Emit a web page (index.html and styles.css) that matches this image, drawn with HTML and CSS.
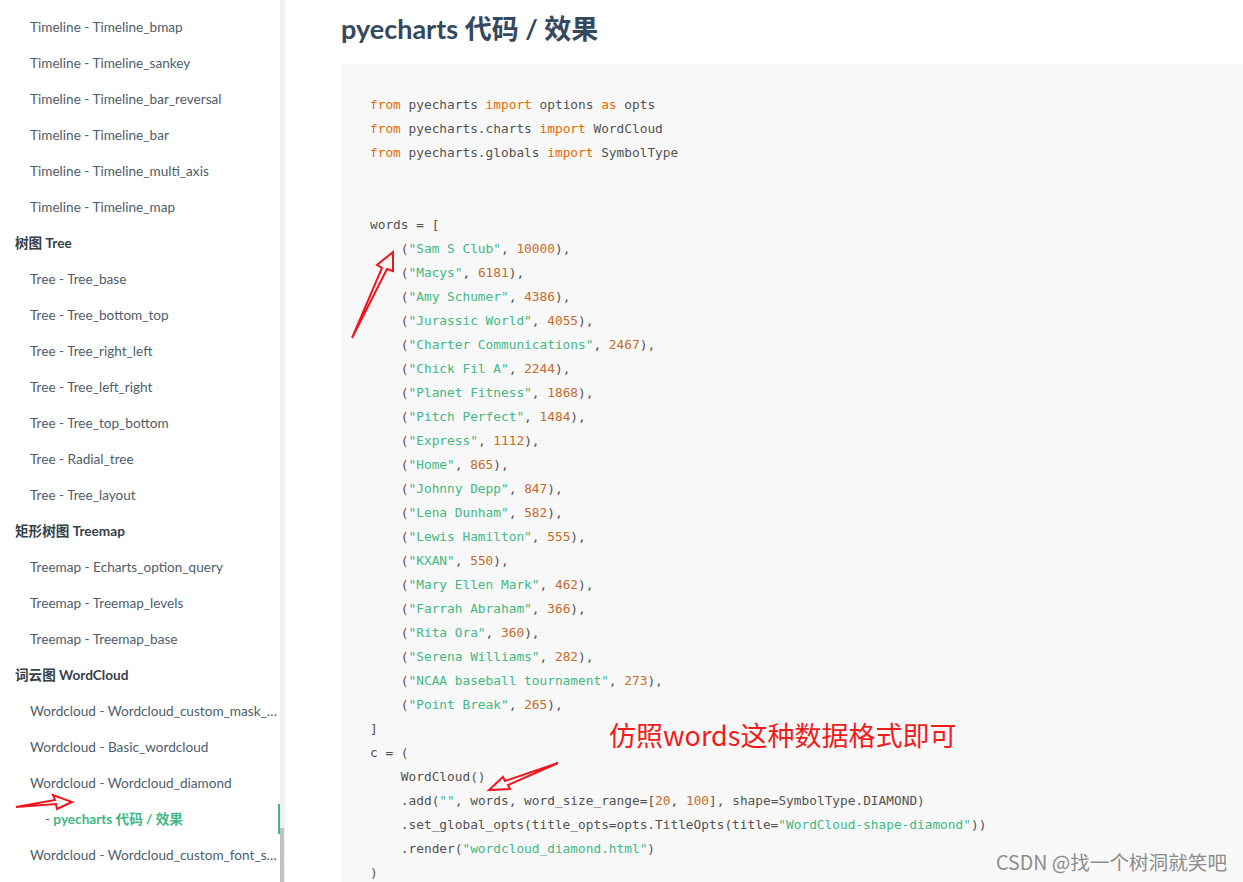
FILE: index.html
```html
<!DOCTYPE html>
<html lang="zh-CN">
<head>
    <meta charset="UTF-8">
    <meta name="viewport" content="width=device-width, initial-scale=1.0">
    <title>pyecharts - WordCloud</title>
    <link rel="stylesheet" href="styles.css">
</head>
<body>

<aside class="sidebar">
    <ul class="nav">
        <li class="nav-item">Timeline - Timeline_bmap</li>
        <li class="nav-item">Timeline - Timeline_sankey</li>
        <li class="nav-item">Timeline - Timeline_bar_reversal</li>
        <li class="nav-item">Timeline - Timeline_bar</li>
        <li class="nav-item">Timeline - Timeline_multi_axis</li>
        <li class="nav-item">Timeline - Timeline_map</li>
        <li class="nav-group">树图 Tree</li>
        <li class="nav-item">Tree - Tree_base</li>
        <li class="nav-item">Tree - Tree_bottom_top</li>
        <li class="nav-item">Tree - Tree_right_left</li>
        <li class="nav-item">Tree - Tree_left_right</li>
        <li class="nav-item">Tree - Tree_top_bottom</li>
        <li class="nav-item">Tree - Radial_tree</li>
        <li class="nav-item">Tree - Tree_layout</li>
        <li class="nav-group">矩形树图 Treemap</li>
        <li class="nav-item">Treemap - Echarts_option_query</li>
        <li class="nav-item">Treemap - Treemap_levels</li>
        <li class="nav-item">Treemap - Treemap_base</li>
        <li class="nav-group">词云图 WordCloud</li>
        <li class="nav-item">Wordcloud - Wordcloud_custom_mask_image</li>
        <li class="nav-item">Wordcloud - Basic_wordcloud</li>
        <li class="nav-item">Wordcloud - Wordcloud_diamond</li>
        <li class="nav-sub active"><span class="dash">-</span> pyecharts 代码 / 效果</li>
        <li class="nav-item">Wordcloud - Wordcloud_custom_font_style</li>
    </ul>
    <div class="scrollbar"><div class="thumb"></div></div>
</aside>

<main class="content">
    <h1 class="title">pyecharts 代码 / 效果</h1>
    <div class="code">
        <div class="line"><span class="kw">from</span> pyecharts <span class="kw">import</span> options <span class="kw">as</span> opts</div>
        <div class="line"><span class="kw">from</span> pyecharts.charts <span class="kw">import</span> WordCloud</div>
        <div class="line"><span class="kw">from</span> pyecharts.globals <span class="kw">import</span> SymbolType</div>
        <div class="line"></div>
        <div class="line"></div>
        <div class="line">words = [</div>
        <div class="line in1">(<span class="str">"Sam S Club"</span>, <span class="num">10000</span>),</div>
        <div class="line in1">(<span class="str">"Macys"</span>, <span class="num">6181</span>),</div>
        <div class="line in1">(<span class="str">"Amy Schumer"</span>, <span class="num">4386</span>),</div>
        <div class="line in1">(<span class="str">"Jurassic World"</span>, <span class="num">4055</span>),</div>
        <div class="line in1">(<span class="str">"Charter Communications"</span>, <span class="num">2467</span>),</div>
        <div class="line in1">(<span class="str">"Chick Fil A"</span>, <span class="num">2244</span>),</div>
        <div class="line in1">(<span class="str">"Planet Fitness"</span>, <span class="num">1868</span>),</div>
        <div class="line in1">(<span class="str">"Pitch Perfect"</span>, <span class="num">1484</span>),</div>
        <div class="line in1">(<span class="str">"Express"</span>, <span class="num">1112</span>),</div>
        <div class="line in1">(<span class="str">"Home"</span>, <span class="num">865</span>),</div>
        <div class="line in1">(<span class="str">"Johnny Depp"</span>, <span class="num">847</span>),</div>
        <div class="line in1">(<span class="str">"Lena Dunham"</span>, <span class="num">582</span>),</div>
        <div class="line in1">(<span class="str">"Lewis Hamilton"</span>, <span class="num">555</span>),</div>
        <div class="line in1">(<span class="str">"KXAN"</span>, <span class="num">550</span>),</div>
        <div class="line in1">(<span class="str">"Mary Ellen Mark"</span>, <span class="num">462</span>),</div>
        <div class="line in1">(<span class="str">"Farrah Abraham"</span>, <span class="num">366</span>),</div>
        <div class="line in1">(<span class="str">"Rita Ora"</span>, <span class="num">360</span>),</div>
        <div class="line in1">(<span class="str">"Serena Williams"</span>, <span class="num">282</span>),</div>
        <div class="line in1">(<span class="str">"NCAA baseball tournament"</span>, <span class="num">273</span>),</div>
        <div class="line in1">(<span class="str">"Point Break"</span>, <span class="num">265</span>),</div>
        <div class="line">]</div>
        <div class="line">c = (</div>
        <div class="line in1">WordCloud()</div>
        <div class="line in1">.add(<span class="str">""</span>, words, word_size_range=[<span class="num">20</span>, <span class="num">100</span>], shape=SymbolType.DIAMOND)</div>
        <div class="line in1">.set_global_opts(title_opts=opts.TitleOpts(title=<span class="str">"WordCloud-shape-diamond"</span>))</div>
        <div class="line in1">.render(<span class="str">"wordcloud_diamond.html"</span>)</div>
        <div class="line">)</div>
    </div>
</main>

<!-- red annotations drawn over the screenshot -->
<div class="note">仿照words这种数据格式即可</div>
<svg class="marks" width="1243" height="882" viewBox="0 0 1243 882">
    <polygon points="352,338 382,268 377,265 393,252 393,271 387,269 352,338" />
    <polygon points="16,807 55,800 53,795 72,802 57,809 56,804 16,807" />
    <polygon points="558,763 505,781 503,777 489,790 510,789 508,785 558,763" />
</svg>
<div class="watermark">CSDN @找一个树洞就笑吧</div>

</body>
</html>
```

FILE: styles.css
```css
html, body {
    margin: 0;
    padding: 0;
    height: 100%;
    overflow: hidden;
}
body {
    font-family: Lato, "Noto Sans CJK SC", sans-serif;
    background-color: #fff;
    display: flex;
    position: relative;
}
.sidebar {
    width: 285px;
    flex-shrink: 0;
    display: flex;
    height: 882px;
}
.nav {
    list-style: none;
    margin: 0;
    padding: 9px 0 0 0;
    width: 280px;
    font-size: 13.6px;
}
.nav li {
    height: 36px;
    line-height: 36px;
    white-space: nowrap;
    overflow: hidden;
    text-overflow: ellipsis;
    box-sizing: border-box;
}
.nav-item {
    padding-left: 30px;
    padding-right: 2px;
    color: #505d6b;
}
.nav-group {
    padding-left: 15px;
    color: #364149;
    font-weight: bold;
}
.nav-sub {
    padding-left: 45px;
    color: #42b983;
    font-weight: bold;
}
.nav-sub .dash {
    color: #505d6b;
    font-weight: normal;
}
.nav .active {
    height: 30px;
    line-height: 30px;
    margin: 3px 0;
    border-right: 2px solid #42b983;
}
.scrollbar {
    width: 5px;
    height: 100%;
    background-color: #f1f1f1;
    display: flex;
    flex-direction: column;
    justify-content: flex-end;
}
.thumb {
    width: 4px;
    height: 54px;
    background-color: #c1c1c1;
}
.content {
    flex: 1;
    padding-left: 56px;
    min-width: 0;
}
.title {
    margin: 10px 0 0 0;
    height: 54px;
    font-size: 27px;
    font-weight: 700;
    color: #34495e;
    line-height: 38px;
}
.code {
    background-color: #f8f8f8;
    padding: 29px 0 0 29px;
    height: 818px;
    overflow: hidden;
    box-sizing: border-box;
    font-family: "DejaVu Sans Mono", monospace;
    font-size: 12.8px;
    color: #525252;
}
.line {
    height: 24px;
    line-height: 24px;
    white-space: pre;
}
.in1 {
    padding-left: 4ch;
}
.kw {
    color: #e96900;
}
.str {
    color: #42b983;
}
.num {
    color: #c76b29;
}
.note {
    position: absolute;
    left: 609px;
    top: 715px;
    font-family: "Noto Sans CJK SC", sans-serif;
    font-size: 27px;
    line-height: 40px;
    color: #f01c1c;
}
.marks {
    position: absolute;
    left: 0;
    top: 0;
    pointer-events: none;
}
.marks polygon {
    fill: none;
    stroke: #f0161e;
    stroke-width: 2;
    stroke-linejoin: miter;
}
.watermark {
    position: absolute;
    right: 16px;
    top: 849px;
    font-family: "Noto Sans CJK SC", sans-serif;
    font-size: 19.6px;
    line-height: 26px;
    color: #8c8c8c;
}
```
